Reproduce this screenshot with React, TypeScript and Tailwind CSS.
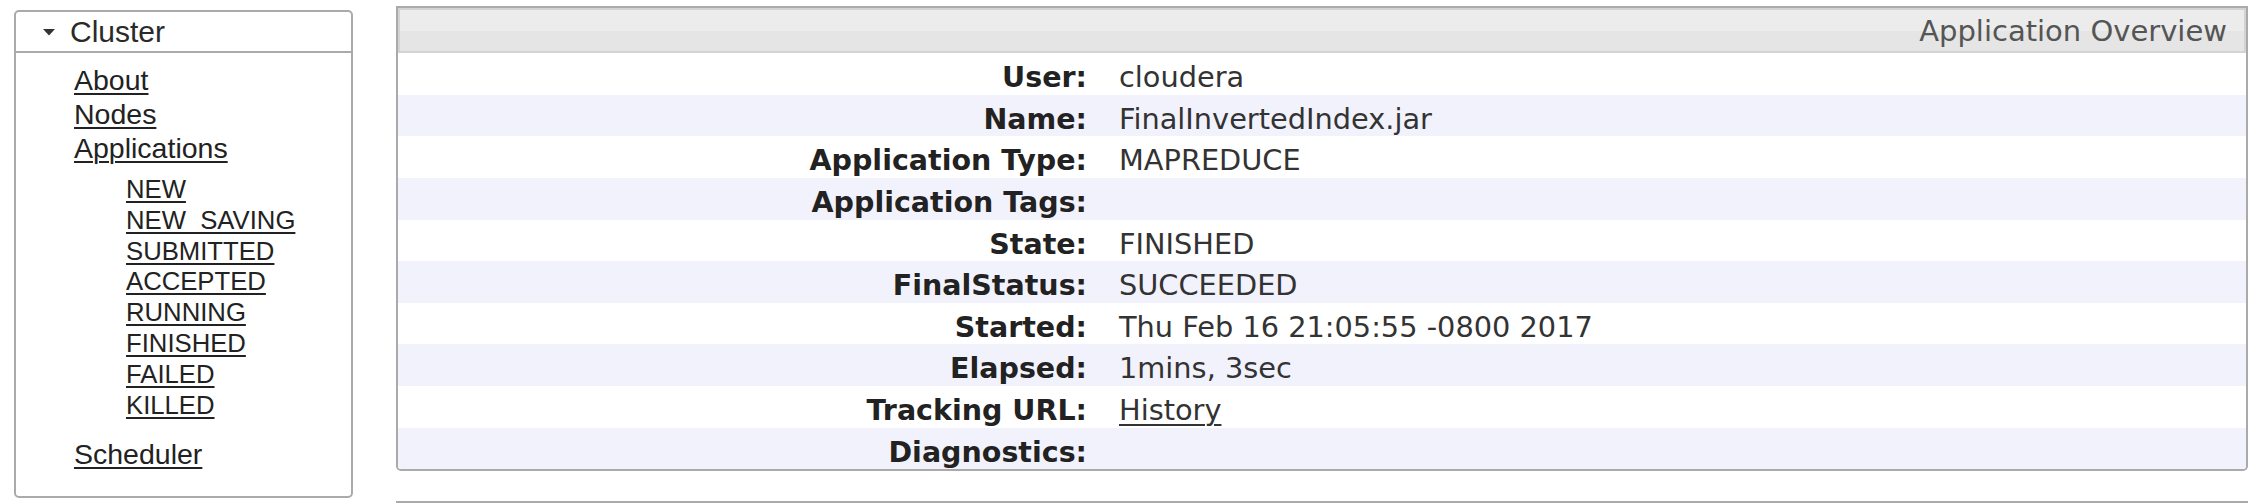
import React from 'react'

const mainLinks = ['About', 'Nodes', 'Applications']
const states = ['NEW', 'NEW_SAVING', 'SUBMITTED', 'ACCEPTED', 'RUNNING', 'FINISHED', 'FAILED', 'KILLED']

const rows: { label: string; value?: string; link?: boolean }[] = [
  { label: 'User:', value: 'cloudera' },
  { label: 'Name:', value: 'FinalInvertedIndex.jar' },
  { label: 'Application Type:', value: 'MAPREDUCE' },
  { label: 'Application Tags:' },
  { label: 'State:', value: 'FINISHED' },
  { label: 'FinalStatus:', value: 'SUCCEEDED' },
  { label: 'Started:', value: 'Thu Feb 16 21:05:55 -0800 2017' },
  { label: 'Elapsed:', value: '1mins, 3sec' },
  { label: 'Tracking URL:', value: 'History', link: true },
  { label: 'Diagnostics:' },
]

function Sidebar() {
  return (
    <div className="w-[339px] h-[488px] mt-[10px] border-2 border-[#aaa] rounded-[5px] bg-white font-['Liberation_Sans',Arial,sans-serif] text-[#222]">
      {/* Header */}
      <div className="h-[41px] border-b-2 border-[#aaa] flex items-center pl-[27px]">
        <svg width="12" height="7" viewBox="0 0 12 7" className="mr-[15px] mt-[2px]">
          <path d="M0 0 L12 0 L6 6.5 Z" fill="#333" />
        </svg>
        <span className="text-[30px] leading-[41px] text-[#2a2a2a]">Cluster</span>
      </div>

      {/* Links */}
      <ul className="pl-[58px] pt-[10px]">
        {mainLinks.map(l => (
          <li key={l} className="text-[28.5px] leading-[34px]">
            <a href="#" className="underline underline-offset-[3px] decoration-[2px] text-[#222]">{l}</a>
          </li>
        ))}
        <li>
          <ul className="pl-[52px] pt-[9px]">
            {states.map(s => (
              <li key={s} className="text-[25.7px] leading-[30.8px]">
                <a href="#" className="underline underline-offset-[3px] decoration-[2px] text-[#222]">{s}</a>
              </li>
            ))}
          </ul>
        </li>
        <li className="text-[28.5px] leading-[34px] pt-[17px]">
          <a href="#" className="underline underline-offset-[3px] decoration-[2px] text-[#222]">Scheduler</a>
        </li>
      </ul>
    </div>
  )
}

function Overview() {
  return (
    <div className="flex-1 flex flex-col">
      <div className="mt-[6px] border-2 border-[#aaa] rounded-b-[5px] bg-white overflow-hidden font-['DejaVu_Sans',Verdana,sans-serif]">
        {/* Header */}
        <div className="h-[45px] border-2 border-[#d3d3d3] bg-[linear-gradient(#ececec_0,#ececec_50%,#e5e5e5_50%,#e5e5e5_100%)] flex items-center justify-end pr-[17px]">
          <span className="text-[29px] leading-[48px] text-[#555]">Application Overview</span>
        </div>

        {/* Rows */}
        <div className="grid grid-cols-[705px_1fr]">
          {rows.map((r, i) => (
            <React.Fragment key={r.label}>
              <div
                className={`h-[41.65px] leading-[49px] pr-[16px] text-right text-[28.5px] font-bold text-[#222] whitespace-nowrap ${i % 2 ? 'bg-[#f2f2fd]' : 'bg-white'}`}
              >
                {r.label}
              </div>
              <div
                className={`h-[41.65px] leading-[49px] pl-[16px] text-[28.8px] text-[#333] whitespace-nowrap ${i % 2 ? 'bg-[#f2f2fd]' : 'bg-white'}`}
              >
                {r.link ? (
                  <a href="#" className="underline underline-offset-[4px] decoration-[2px] text-[#333]">{r.value}</a>
                ) : (
                  r.value
                )}
              </div>
            </React.Fragment>
          ))}
        </div>
      </div>

      {/* next panel edge */}
      <div className="mt-[30px] border-t-2 border-[#aaa]" />
    </div>
  )
}

export default function App() {
  return (
    <div className="w-[2258px] h-[504px] bg-white overflow-hidden flex pl-[14px] pr-[10px] gap-[43px]">
      <Sidebar />
      <Overview />
    </div>
  )
}
